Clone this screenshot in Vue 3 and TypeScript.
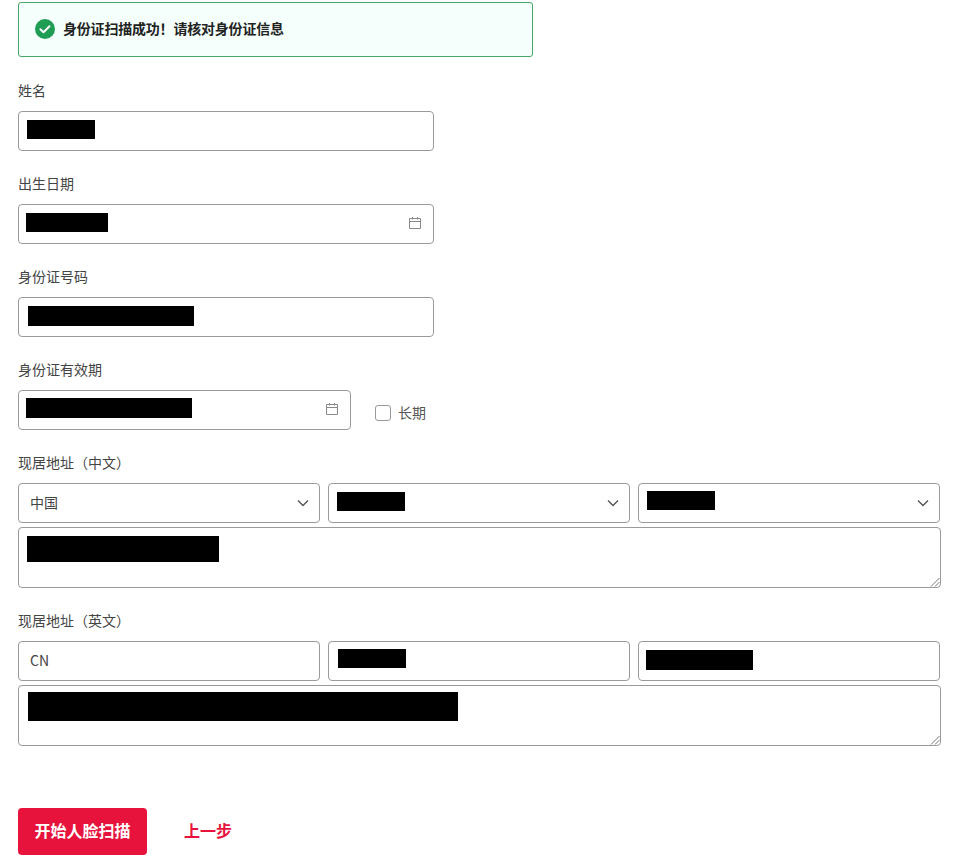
<script setup lang="ts">
const title: string = '身份证扫描成功\uFF01请核对身份证信息'
</script>

<template>
  <main class="page">
    <div class="alert">
      <svg class="check" width="20" height="20" viewBox="0 0 20 20" aria-hidden="true">
        <circle cx="10" cy="10" r="10" fill="#1f9d55" />
        <path d="M5.400 10.200l3.100 3 6-6" fill="none" stroke="#fff" stroke-width="2" stroke-linecap="round" stroke-linejoin="round" />
      </svg>
      <span class="alert-text">{{ title }}</span>
    </div>

    <section class="group">
      <label>姓名</label>
      <div class="field w-full"><i class="mask m-name"></i></div>
    </section>

    <section class="group">
      <label>出生日期</label>
      <div class="field w-full">
        <i class="mask m-birth"></i>
        <svg class="cal" width="14" height="14" viewBox="0 0 14 14" aria-hidden="true">
          <path d="M1.500 2.500h11v10h-11zM1.500 5.500h11M4.500 1v2.500M9.500 1v2.500" fill="none" stroke="#8a8a8a" stroke-width="1" />
        </svg>
      </div>
    </section>

    <section class="group">
      <label>身份证号码</label>
      <div class="field w-full"><i class="mask m-id"></i></div>
    </section>

    <section class="group">
      <label>身份证有效期</label>
      <div class="row-exp">
        <div class="field w-exp">
          <i class="mask m-exp"></i>
          <svg class="cal" width="14" height="14" viewBox="0 0 14 14" aria-hidden="true">
            <path d="M1.500 2.500h11v10h-11zM1.500 5.500h11M4.500 1v2.500M9.500 1v2.500" fill="none" stroke="#8a8a8a" stroke-width="1" />
          </svg>
        </div>
        <span class="box"></span>
        <span class="long">长期</span>
      </div>
    </section>

    <section class="group">
      <label>现居地址&#xFF08;中文&#xFF09;</label>
      <div class="triple">
        <div class="field">
          <span class="val">中国</span>
          <svg class="chev" width="12" height="8" viewBox="0 0 12 8" aria-hidden="true"><path d="M1 1.500l5 5 5-5" fill="none" stroke="#555" stroke-width="1.400" /></svg>
        </div>
        <div class="field">
          <i class="mask m-prov"></i>
          <svg class="chev" width="12" height="8" viewBox="0 0 12 8" aria-hidden="true"><path d="M1 1.500l5 5 5-5" fill="none" stroke="#555" stroke-width="1.400" /></svg>
        </div>
        <div class="field">
          <i class="mask m-city"></i>
          <svg class="chev" width="12" height="8" viewBox="0 0 12 8" aria-hidden="true"><path d="M1 1.500l5 5 5-5" fill="none" stroke="#555" stroke-width="1.400" /></svg>
        </div>
      </div>
      <div class="area">
        <i class="mask m-addr"></i>
        <svg class="grip" width="10" height="10" viewBox="0 0 10 10" aria-hidden="true"><path d="M1 9.500L9.500 1M5 9.500L9.500 5" stroke="#777" stroke-width="1" fill="none" /></svg>
      </div>
    </section>

    <section class="group">
      <label>现居地址&#xFF08;英文&#xFF09;</label>
      <div class="triple">
        <div class="field"><span class="val">CN</span></div>
        <div class="field"><i class="mask m-prov-en"></i></div>
        <div class="field"><i class="mask m-city-en"></i></div>
      </div>
      <div class="area area-en">
        <i class="mask m-addr-en"></i>
        <svg class="grip" width="10" height="10" viewBox="0 0 10 10" aria-hidden="true"><path d="M1 9.500L9.500 1M5 9.500L9.500 5" stroke="#777" stroke-width="1" fill="none" /></svg>
      </div>
    </section>

    <div class="actions">
      <button class="primary" type="button"><span class="primary-text">开始人脸扫描</span></button>
      <a class="back">上一步</a>
    </div>
  </main>
</template>

<style scoped>
.page {
  box-sizing: border-box;
  width: 976px;
  height: 859px;
  overflow: hidden;
  padding: 2px 0 0 18px;
  background: #fff;
  font-family: "Noto Sans CJK SC", "Noto Sans", sans-serif;
  font-size: 14px;
  color: #333;
}
.alert {
  box-sizing: border-box;
  width: 515px;
  height: 55px;
  display: flex;
  align-items: center;
  gap: 8px;
  padding: 0 0 0 16px;
  background: #f5fffb;
  border: 1px solid #45a866;
  border-radius: 3px;
  font-size: 14px;
  font-weight: 700;
  letter-spacing: -0.2px;
  color: #222;
}
.alert-text { margin-top: -3px; }
.check { flex: none; margin-top: -1px; }
.group { margin-top: 24px; }
.group + .group { margin-top: 23px; }
label {
  display: block;
  height: 20px;
  line-height: 18px;
  margin-bottom: 10px;
  color: #444;
}
.field {
  box-sizing: border-box;
  height: 40px;
  display: flex;
  align-items: center;
  justify-content: space-between;
  padding: 0 8px;
  background: #fff;
  border: 1px solid #9a9a9a;
  border-radius: 4px;
}
.w-full { width: 416px; }
.w-exp { width: 333px; }
.mask { display: block; background: #000; }
.m-name { width: 68px; height: 19px; margin-top: -3px; }
.m-birth { width: 82px; height: 19px; margin: -3px 0 0 -1px; }
.m-id { width: 166px; height: 20px; margin: -2px 0 0 1px; }
.m-exp { width: 166px; height: 20px; margin: -4px 0 0 -1px; }
.m-prov { width: 68px; height: 19px; margin-top: -3px; }
.m-city { width: 68px; height: 19px; margin-top: -5px; }
.m-prov-en { width: 68px; height: 19px; margin: -5px 0 0 1px; }
.m-city-en { width: 107px; height: 20px; margin: -2px 0 0 -1px; }
.cal { margin: -2px 3px 0 0; }
.row-exp { display: flex; align-items: center; }
.box {
  box-sizing: border-box;
  width: 16px;
  height: 16px;
  margin: 5px 0 0 24px;
  border: 1px solid #999;
  border-radius: 3px;
}
.long { margin: 4px 0 0 7px; color: #555; }
.triple { display: grid; grid-template-columns: 302px 302px 302px; column-gap: 8px; }
.val { padding-left: 3px; margin-top: -3px; color: #444; }
.chev { margin: 0 2px 0 0; }
.area {
  box-sizing: border-box;
  position: relative;
  width: 923px;
  height: 61px;
  margin-top: 4px;
  padding: 8px 8px;
  border: 1px solid #9a9a9a;
  border-radius: 4px;
}
.area-en { padding-top: 6px; padding-left: 9px; }
.m-addr { width: 192px; height: 26px; }
.m-addr-en { width: 430px; height: 29px; }
.grip { position: absolute; right: 0; bottom: 0; }
.actions { display: flex; align-items: center; margin-top: 62px; }
.primary {
  width: 129px;
  height: 47px;
  padding: 0;
  border: 0;
  border-radius: 4px;
  background: #e8133c;
  color: #fff;
  font: 700 16px "Noto Sans CJK SC", sans-serif;
}
.primary-text { display: block; margin-top: -3px; }
.back { margin: -3px 0 0 37px; color: #e8133c; font-size: 16px; font-weight: 700; }
</style>
